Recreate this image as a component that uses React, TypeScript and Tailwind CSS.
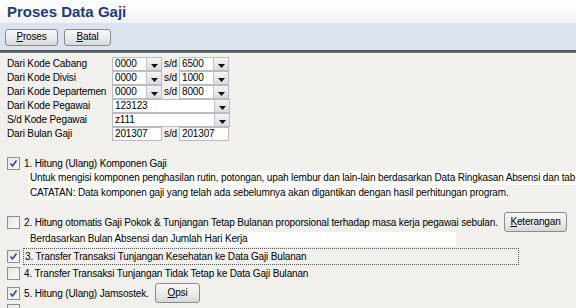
import React from 'react';

const Arrow = () => (
  <svg width="7" height="4" viewBox="0 0 7 4" className="mt-[4px]">
    <path d="M0 0h7L3.5 4z" fill="#111" />
  </svg>
);

const Combo = ({ value, width = 'w-[50px]' }: { value: string; width?: string }) => (
  <div className={`${width} h-[14px] flex bg-white border border-[#b9bcc2]`}>
    <div className="flex-1 pl-[2px] leading-[12px]">{value}</div>
    <div className="w-[15px] h-full bg-gradient-to-b from-[#f4f4f4] to-[#dcdcdc] border-l border-[#c4c4c4] flex items-center justify-center">
      <Arrow />
    </div>
  </div>
);

const Field = ({ value, width }: { value: string; width: string }) => (
  <div className={`${width} h-[14px] bg-white border border-[#b9bcc2] pl-[2px] leading-[12px]`}>{value}</div>
);

const Sd = () => <div className="w-[17px] text-center leading-[14px]">s/d</div>;

const Check = ({ checked }: { checked?: boolean }) => (
  <div className="w-[13px] h-[13px] shrink-0 border border-[#8e8f8f] bg-gradient-to-br from-[#e6e6e6] to-[#fbfbfb] flex items-center justify-center">
    {checked && (
      <svg width="9" height="9" viewBox="0 0 9 9">
        <path d="M1.5 4.5 L3.5 7 L7.5 1.5" fill="none" stroke="#2a4a9a" strokeWidth="1.6" />
      </svg>
    )}
  </div>
);

const Btn = ({ first, rest, cls }: { first: string; rest: string; cls: string }) => (
  <button className={`${cls} shrink-0 rounded-[3px] border border-[#8a8a8a] bg-gradient-to-b from-[#f7f7f7] via-[#ececec] to-[#d8d8d8] text-center leading-none`}>
    <span className="underline">{first}</span>
    {rest}
  </button>
);

const rows: { label: string; el: React.ReactNode }[] = [
  {
    label: 'Dari Kode Cabang',
    el: (
      <>
        <Combo value="0000" />
        <Sd />
        <Combo value="6500" />
      </>
    ),
  },
  {
    label: 'Dari Kode Divisi',
    el: (
      <>
        <Combo value="0000" />
        <Sd />
        <Combo value="1000" />
      </>
    ),
  },
  {
    label: 'Dari Kode Departemen',
    el: (
      <>
        <Combo value="0000" />
        <Sd />
        <Combo value="8000" />
      </>
    ),
  },
  { label: 'Dari Kode Pegawai', el: <Combo value="123123" width="w-[118px]" /> },
  { label: 'S/d Kode Pegawai', el: <Combo value="z111" width="w-[118px]" /> },
  {
    label: 'Dari Bulan Gaji',
    el: (
      <>
        <Field value="201307" width="w-[50px]" />
        <Sd />
        <Field value="201307" width="w-[50px]" />
      </>
    ),
  },
];

export default function App() {
  return (
    <div className="w-[576px] h-[308px] overflow-hidden bg-[#f1f0ec] text-[10px] tracking-[-0.15px] whitespace-nowrap text-black font-['Liberation_Sans',sans-serif]">
      <div className="h-[22px] bg-gradient-to-b from-white to-[#f1f3f5] pl-[7px] flex items-center">
        <h1 className="text-[15px] font-bold tracking-normal text-[#1f3b7a] leading-none">Proses Data Gaji</h1>
      </div>
      <div className="h-[28px] bg-[#dce3f0] border-t border-[#eef3f9] flex items-center gap-[6px] pl-[5px] pt-[1px]">
        <Btn first="P" rest="roses" cls="w-[53px] h-[17px]" />
        <Btn first="B" rest="atal" cls="w-[47px] h-[17px]" />
      </div>
      <div className="h-[3px] bg-gradient-to-b from-[#42464c] to-[#777b81]" />

      <div className="pt-[4px] pl-[7px]">
        {rows.map((r) => (
          <div key={r.label} className="h-[14px] flex items-center">
            <div className="w-[105px] leading-[14px]">{r.label}</div>
            {r.el}
          </div>
        ))}
      </div>

      <div className="mt-[15px]">
        <div className="h-[14px] flex items-center pl-[7px] gap-[4px]">
          <Check checked />
          <span>1. Hitung (Ulang) Komponen Gaji</span>
        </div>
        <div className="pl-[28px] pt-[1px]">
          <div className="bg-white h-[14px] leading-[14px] pl-[2px] overflow-hidden">
            Untuk mengisi komponen penghasilan rutin, potongan, upah lembur dan lain-lain berdasarkan Data Ringkasan Absensi dan tab
          </div>
          <div className="bg-white h-[14px] leading-[14px] pl-[2px] w-[480px] mt-[1px]">
            CATATAN: Data komponen gaji yang telah ada sebelumnya akan digantikan dengan hasil perhitungan program.
          </div>
        </div>

        <div className="mt-[12px] h-[20px] flex items-center pl-[7px] gap-[4px]">
          <Check />
          <span className="w-[476px] shrink-0">
            2. Hitung otomatis Gaji Pokok &amp; Tunjangan Tetap Bulanan proporsional terhadap masa kerja pegawai sebulan.
          </span>
          <Btn first="K" rest="eterangan" cls="w-[63px] h-[20px]" />
        </div>
        <div className="pl-[27px]">
          <div className="bg-white h-[14px] leading-[14px] pl-[3px] w-[429px]">
            Berdasarkan Bulan Absensi dan Jumlah Hari Kerja
          </div>
        </div>

        <div className="mt-[2px] h-[17px] flex items-center pl-[7px] gap-[3px]">
          <Check checked />
          <span className="w-[496px] h-[17px] leading-[15px] border border-dotted border-[#555] pl-[1px]">
            3. Transfer Transaksi Tunjangan Kesehatan ke Data Gaji Bulanan
          </span>
        </div>
        <div className="h-[17px] flex items-center pl-[7px] gap-[4px]">
          <Check />
          <span>4. Transfer Transaksi Tunjangan Tidak Tetap ke Data Gaji Bulanan</span>
        </div>
        <div className="mt-[1px] h-[20px] flex items-center pl-[7px] gap-[4px]">
          <Check checked />
          <span className="w-[127px] shrink-0">5. Hitung (Ulang) Jamsostek.</span>
          <Btn first="O" rest="psi" cls="w-[45px] h-[20px]" />
        </div>
        <div className="mt-[1px] pl-[7px]">
          <Check />
        </div>
      </div>
    </div>
  );
}
